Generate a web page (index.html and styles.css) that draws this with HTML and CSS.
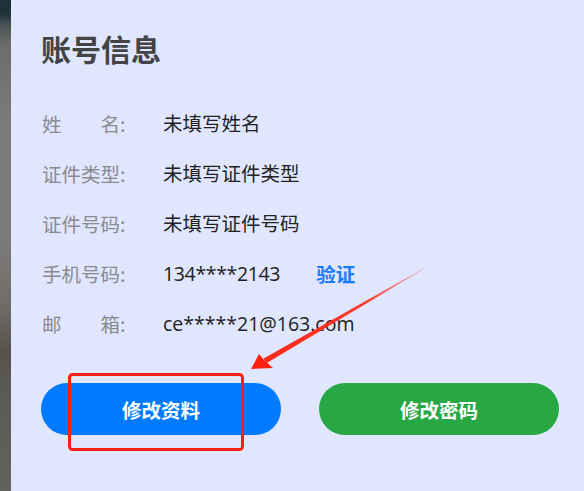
FILE: index.html
```html
<!DOCTYPE html>
<html lang="zh-CN">
<head>
<meta charset="utf-8">
<title>账号信息</title>
<link rel="stylesheet" href="styles.css">
</head>
<body>
<div class="page">
  <div class="photo-strip"></div>
  <section class="panel">
    <h2 class="title">账号信息</h2>
    <dl class="info">
      <div class="row"><dt class="lbl"><span class="lbl-text">姓名</span>:</dt><dd class="val">未填写姓名</dd></div>
      <div class="row"><dt class="lbl"><span class="lbl-text">证件类型</span>:</dt><dd class="val">未填写证件类型</dd></div>
      <div class="row"><dt class="lbl"><span class="lbl-text">证件号码</span>:</dt><dd class="val">未填写证件号码</dd></div>
      <div class="row"><dt class="lbl"><span class="lbl-text">手机号码</span>:</dt><dd class="val"><span class="phone">134****2143</span><a class="verify">验证</a></dd></div>
      <div class="row"><dt class="lbl"><span class="lbl-text">邮箱</span>:</dt><dd class="val">ce*****21@163.com</dd></div>
    </dl>
    <div class="actions">
      <button class="btn btn-blue">修改资料</button>
      <button class="btn btn-green">修改密码</button>
    </div>
  </section>
  <svg class="annot" width="584" height="491" viewBox="0 0 584 491">
    <defs>
      <linearGradient id="fade" gradientUnits="userSpaceOnUse" x1="425" y1="268" x2="265" y2="361">
        <stop offset="0" stop-color="#ff2a1a" stop-opacity="0.15"/>
        <stop offset="0.35" stop-color="#ff2a1a" stop-opacity="0.9"/>
        <stop offset="1" stop-color="#ff2a1a" stop-opacity="1"/>
      </linearGradient>
    </defs>
    <rect x="69.5" y="374.5" width="173" height="75" rx="3" fill="none" stroke="#ff1e12" stroke-width="3"/>
    <polygon points="425,267.6 425.3,268.3 266.4,363.2 263.6,358.6" fill="url(#fade)"/>
    <polygon points="251,369 259,354 264,360 273,368" fill="#ff1e12"/>
  </svg>
</div>
</body>
</html>
```
FILE: styles.css
```css
html, body {
  margin: 0;
  padding: 0;
}
body {
  width: 584px;
  height: 491px;
  overflow: hidden;
  font-family: "Noto Sans CJK SC", "Noto Sans", sans-serif;
}
.page {
  position: relative;
  display: flex;
  width: 584px;
  height: 491px;
}
.photo-strip {
  width: 11px;
  flex: none;
  background: linear-gradient(to bottom,
    #1b3238 0px, #1e3439 14px, #4f5556 26px, #6c6c6d 45px,
    #7a7a7c 120px, #7c7c7e 230px, #77726f 280px, #6d6a66 310px,
    #57534c 350px, #5c5b56 400px, #62615c 491px);
}
.panel {
  flex: 1;
  background: #dfe6fd;
  padding: 28px 0 0 30px;
  color: #222;
}
.title {
  margin: 0;
  font-size: 30px;
  line-height: 40px;
  font-weight: 700;
  color: #444;
}
.info {
  margin: 31px 0 0;
  padding: 0;
}
.row {
  display: flex;
  align-items: center;
  height: 50px;
  font-size: 19.5px;
  line-height: 50px;
}
.lbl {
  width: 122px;
  flex: none;
  color: #8a8a8f;
  display: flex;
  padding-left: 1px;
  box-sizing: border-box;
}
.lbl-text {
  display: inline-block;
  width: 78px;
  text-align: justify;
  text-align-last: justify;
}
.val {
  margin: 0;
  color: #222;
  display: flex;
  align-items: center;
  font-family: "Open Sans", "Noto Sans CJK SC", sans-serif;
}
.phone {
  letter-spacing: -0.35px;
}
.verify {
  margin-left: 36px;
  color: #1a7af8;
  font-weight: 700;
  font-family: "Noto Sans CJK SC", sans-serif;
  cursor: pointer;
}
.actions {
  display: flex;
  gap: 38px;
  margin-top: 34px;
}
.btn {
  width: 240px;
  height: 52px;
  border: none;
  border-radius: 26px;
  color: #fff;
  font-family: "Noto Sans CJK SC", "Noto Sans", sans-serif;
  font-size: 19.5px;
  font-weight: 700;
  padding: 0;
}
.btn-blue { background: #007bff; }
.btn-green { background: #28a745; }
.annot {
  position: absolute;
  left: 0;
  top: 0;
  pointer-events: none;
}
```
